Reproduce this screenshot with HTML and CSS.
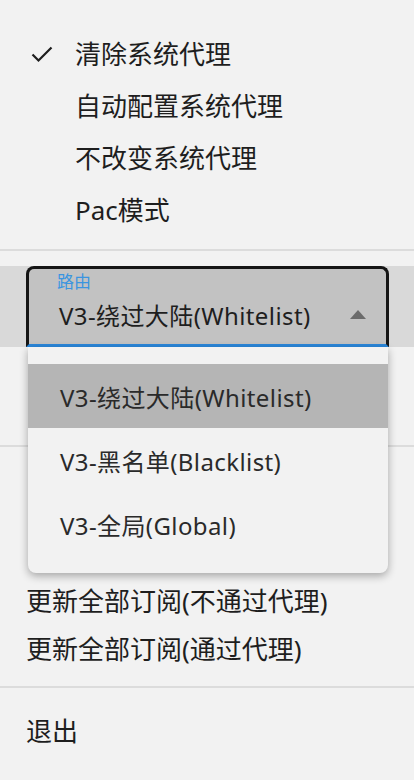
FILE: index.html
```html
<!DOCTYPE html>
<html lang="zh-CN">
<head>
<meta charset="utf-8">
<title>Tray menu</title>
<link rel="stylesheet" href="styles.css">
</head>
<body>
<div class="menu">
  <div class="group-top">
    <div class="item">
      <span class="check-col">
        <svg class="check" width="22" height="18" viewBox="0 0 22 18"><polyline points="1.5,9.5 7.5,15.5 20.5,2.5" fill="none" stroke="#1e1e1e" stroke-width="2.2"/></svg>
      </span>
      <span>清除系统代理</span>
    </div>
    <div class="item"><span class="check-col"></span><span>自动配置系统代理</span></div>
    <div class="item"><span class="check-col"></span><span>不改变系统代理</span></div>
    <div class="item"><span class="check-col"></span><span>Pac模式</span></div>
  </div>
  <div class="sep sep-a"></div>
  <div class="route-row">
    <div class="select">
      <div class="select-texts">
        <span class="select-label">路由</span>
        <span class="select-value">V3-绕过大陆(Whitelist)</span>
      </div>
      <svg class="arrow" width="16" height="9" viewBox="0 0 16 9"><polygon points="0,9 8,0 16,9" fill="#6b6b6b"/></svg>
    </div>
    <div class="popup">
      <div class="option selected">V3-绕过大陆(Whitelist)</div>
      <div class="option">V3-黑名单(Blacklist)</div>
      <div class="option">V3-全局(Global)</div>
    </div>
  </div>
  <div class="server-row"></div>
  <div class="sep sep-b"></div>
  <div class="group-sub">
    <div class="item2 covered"></div>
    <div class="item2 covered"></div>
    <div class="item2">更新全部订阅(不通过代理)</div>
    <div class="item2">更新全部订阅(通过代理)</div>
  </div>
  <div class="sep sep-c"></div>
  <div class="item2 exit">退出</div>
</div>
</body>
</html>
```
FILE: styles.css
```css
html, body {
  margin: 0;
  padding: 0;
}
body {
  width: 414px;
  height: 780px;
  overflow: hidden;
  background: #f2f2f2;
  color: #1e1e1e;
  font-family: "Noto Sans", "Noto Sans CJK SC", sans-serif;
}
.menu {
  display: flex;
  flex-direction: column;
  padding-top: 27px;
}
.item {
  height: 52px;
  display: flex;
  align-items: center;
  font-size: 26px;
}
.check-col {
  width: 75px;
  flex: none;
  display: flex;
  align-items: center;
}
.check {
  margin-left: 31px;
  margin-top: 1px;
}
.sep {
  height: 2px;
  background: #dcdcdc;
  flex: none;
}
.sep-a {
  margin: 14px 0 15px;
}
.route-row {
  position: relative;
  height: 81px;
  background: #d9d9d9;
  padding: 0 25px 0 26px;
}
.select {
  box-sizing: border-box;
  height: 100%;
  border: 3px solid #151515;
  border-bottom: 3px solid #2b87da;
  border-radius: 8px 8px 0 0;
  background: #c2c2c2;
  display: flex;
  align-items: flex-start;
  padding: 2px 20px 0 30px;
}
.select-texts {
  display: flex;
  flex-direction: column;
  gap: 8px;
}
.select-label {
  font-size: 17px;
  line-height: 22px;
  color: #3a95e0;
  margin-left: -2px;
}
.select-value {
  font-size: 24px;
  line-height: 30px;
  letter-spacing: 0.4px;
}
.arrow {
  margin-left: auto;
  margin-top: 39px;
}
.popup {
  position: absolute;
  left: 28px;
  top: 81px;
  width: 360px;
  background: #f2f2f2;
  padding: 17px 0;
  border-radius: 0 0 8px 8px;
  box-shadow: 0 3px 8px rgba(0, 0, 0, 0.32);
  z-index: 2;
}
.option {
  height: 64px;
  display: flex;
  align-items: center;
  padding-left: 32px;
  font-size: 24px;
  letter-spacing: 0.4px;
  color: #2a2a2a;
}
.option.selected {
  background: #b5b5b5;
}
.server-row {
  height: 98px;
}
.sep-b {
  margin-bottom: 33px;
}
.group-sub {
  display: flex;
  flex-direction: column;
}
.item2 {
  height: 48px;
  display: flex;
  align-items: center;
  padding-left: 26px;
  font-size: 26px;
}
.sep-c {
  margin: 14px 0 18px;
}
```
